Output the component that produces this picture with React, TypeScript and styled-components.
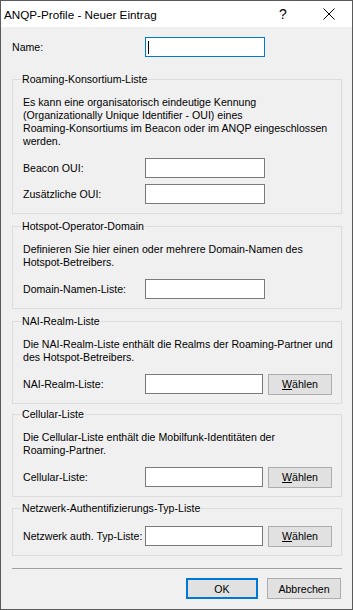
import React from "react";
import styled, { createGlobalStyle } from "styled-components";

const Global = createGlobalStyle`
  html, body { margin: 0; padding: 0; background: #f0f0f0; }
  body { font-family: "Liberation Sans", Arial, sans-serif; font-size: 10.6px; color: #000; }
  * { box-sizing: border-box; }
`;

const Window = styled.div`
  width: 353px;
  height: 610px;
  border: 1px solid #5a5a5a;
  background: #f0f0f0;
  display: flex;
  flex-direction: column;
`;

const TitleBar = styled.div`
  height: 26px;
  background: #fff;
  display: flex;
  align-items: center;
  padding-left: 3px;
  flex-shrink: 0;
`;

const Title = styled.div`
  flex: 1;
  font-size: 11.7px;
  color: #000;
`;

const TitleButton = styled.div<{ $w: number }>`
  width: ${(p) => p.$w}px;
  height: 26px;
  display: flex;
  align-items: center;
  justify-content: center;
  font-size: 14px;
`;

const Body = styled.div`
  flex: 1;
  display: flex;
  flex-direction: column;
  padding: 10px 10px 0 11px;
`;

const Row = styled.div<{ $mt?: number }>`
  display: flex;
  align-items: center;
  height: 20px;
  margin-top: ${(p) => p.$mt ?? 0}px;
`;

const Label = styled.div<{ $w: number }>`
  width: ${(p) => p.$w}px;
  flex-shrink: 0;
  white-space: nowrap;
`;

const Input = styled.div<{ $focus?: boolean }>`
  width: 120px;
  height: 20px;
  background: #fff;
  border: 1px solid ${(p) => (p.$focus ? "#0078d7" : "#7a7a7a")};
  position: relative;
`;

const Caret = styled.div`
  position: absolute;
  left: 2px;
  top: 3px;
  width: 1px;
  height: 13px;
  background: #000;
`;

const Button = styled.div<{ $w: number; $ml: number; $default?: boolean }>`
  width: ${(p) => p.$w}px;
  height: 21px;
  background: #e1e1e1;
  border: ${(p) => (p.$default ? "2px solid #0078d7" : "1px solid #adadad")};
  display: flex;
  align-items: center;
  justify-content: center;
  margin-left: ${(p) => p.$ml}px;
  flex-shrink: 0;
`;

const Group = styled.fieldset<{ $mt: number }>`
  margin: ${(p) => p.$mt}px 0 0 0;
  padding: 0 9px 9px 10px;
  border: 1px solid #dcdcdc;
  min-width: 0;
`;

const Legend = styled.legend`
  padding: 0 1px;
  margin-left: -2px;
  line-height: 13px;
`;

const Text = styled.p`
  margin: 10px 0 10px 0;
  line-height: 13px;
  white-space: nowrap;
`;

const Separator = styled.div`
  height: 1px;
  background: #a0a0a0;
  margin-top: 12px;
`;

const Footer = styled.div`
  display: flex;
  justify-content: flex-end;
  padding-top: 9px;
  padding-right: 1px;
`;

const U = styled.span`
  text-decoration: underline;
`;

const Choose = () => (
  <Button $w={64} $ml={5}>
    <span>
      <U>W</U>ählen
    </span>
  </Button>
);

export default function App() {
  return (
    <>
      <Global />
      <Window>
        <TitleBar>
          <Title>ANQP-Profile - Neuer Eintrag</Title>
          <TitleButton $w={46}>?</TitleButton>
          <TitleButton $w={46}>
            <svg width="12" height="12" viewBox="0 0 12 12">
              <path d="M0.5 0.5 L11.5 11.5 M11.5 0.5 L0.5 11.5" stroke="#000" strokeWidth="1" />
            </svg>
          </TitleButton>
        </TitleBar>
        <Body>
          <Row>
            <Label $w={133}>Name:</Label>
            <Input $focus>
              <Caret />
            </Input>
          </Row>

          <Group $mt={16}>
            <Legend>Roaming-Konsortium-Liste</Legend>
            <Text>
              Es kann eine organisatorisch eindeutige Kennung
              <br />
              (Organizationally Unique Identifier - OUI) eines
              <br />
              Roaming-Konsortiums im Beacon oder im ANQP eingeschlossen
              <br />
              werden.
            </Text>
            <Row>
              <Label $w={122}>Beacon OUI:</Label>
              <Input />
            </Row>
            <Row $mt={6}>
              <Label $w={122}>Zusätzliche OUI:</Label>
              <Input />
            </Row>
          </Group>

          <Group $mt={6}>
            <Legend>Hotspot-Operator-Domain</Legend>
            <Text>
              Definieren Sie hier einen oder mehrere Domain-Namen des
              <br />
              Hotspot-Betreibers.
            </Text>
            <Row>
              <Label $w={122}>Domain-Namen-Liste:</Label>
              <Input />
            </Row>
          </Group>

          <Group $mt={6}>
            <Legend>NAI-Realm-Liste</Legend>
            <Text>
              Die NAI-Realm-Liste enthält die Realms der Roaming-Partner und
              <br />
              des Hotspot-Betreibers.
            </Text>
            <Row>
              <Label $w={122}>NAI-Realm-Liste:</Label>
              <Input />
              <Choose />
            </Row>
          </Group>

          <Group $mt={4}>
            <Legend>Cellular-Liste</Legend>
            <Text>
              Die Cellular-Liste enthält die Mobilfunk-Identitäten der
              <br />
              Roaming-Partner.
            </Text>
            <Row>
              <Label $w={122}>Cellular-Liste:</Label>
              <Input />
              <Choose />
            </Row>
          </Group>

          <Group $mt={5}>
            <Legend>Netzwerk-Authentifizierungs-Typ-Liste</Legend>
            <Row $mt={11}>
              <Label $w={122}>Netzwerk auth. Typ-Liste:</Label>
              <Input />
              <Choose />
            </Row>
          </Group>

          <Separator />
          <Footer>
            <Button $w={72} $ml={0} $default>
              OK
            </Button>
            <Button $w={74} $ml={9}>
              Abbrechen
            </Button>
          </Footer>
        </Body>
      </Window>
    </>
  );
}
